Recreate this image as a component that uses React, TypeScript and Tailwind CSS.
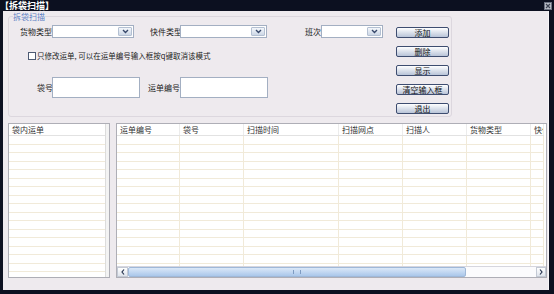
import React from 'react';

const font = "font-['Noto_Sans_CJK_SC','Noto_Sans',sans-serif]";

const Combo: React.FC<{ width: string }> = ({ width }) => (
  <div className={`${width} shrink-0 h-[13px] bg-white border border-[#a3afc2] flex items-center justify-end pr-[1px]`}>
    <div className="w-[14px] h-[9px] rounded-[1px] border border-[#b4c0d2] bg-linear-to-b from-[#f4f7fb] to-[#cdd7e6] flex items-center justify-center">
      <svg width="7" height="5" viewBox="0 0 7 5">
        <path d="M1 1 L3.5 3.5 L6 1" stroke="#37486b" strokeWidth="1.4" fill="none" />
      </svg>
    </div>
  </div>
);

const Btn: React.FC<{ label: string }> = ({ label }) => (
  <div className="w-[53px] h-[11px] rounded-[2px] border border-[#3e4d70] bg-linear-to-b from-[#ffffff] to-[#b9c4d8] flex items-center justify-center text-[8px] leading-none text-[#111] whitespace-nowrap">
    {label}
  </div>
);

const columns = [
  { title: '运单编号', w: 'w-[63px]' },
  { title: '袋号', w: 'w-[64px]' },
  { title: '扫描时间', w: 'w-[95px]' },
  { title: '扫描网点', w: 'w-[64px]' },
  { title: '扫描人', w: 'w-[64px]' },
  { title: '货物类型', w: 'w-[64px]' },
  { title: '快件', w: 'flex-1' },
];

const rows = Array.from({ length: 16 });

export default function App() {
  return (
    <div className={`w-[554px] h-[294px] bg-[#0c1020] flex flex-col ${font}`}>
      <div className="h-[11px] flex items-center justify-between pr-[2px] pt-[1px]">
        <span className="text-white font-bold text-[9px] leading-[10px] whitespace-nowrap">【拆袋扫描】</span>
        <div className="w-[8px] h-[8px] bg-[#b9bdc6] border border-[#6c7282] flex items-center justify-center">
          <svg width="6" height="6" viewBox="0 0 6 6">
            <path d="M1 1 L5 5 M5 1 L1 5" stroke="#3a4050" strokeWidth="1.2" />
          </svg>
        </div>
      </div>

      <div className="flex-1 ml-[3px] mr-[5px] mb-[4px] bg-[#eeeaee] border-r border-[#f8f6f8] flex flex-col text-[8px] text-[#1a1a1a]">
        <fieldset className="ml-[5px] w-[444px] h-[106px] border border-[#dcd7de] rounded-[3px] px-0">
          <legend className="ml-[4px] px-0 text-[8px] leading-[11px] text-[#5b7fc4]">拆袋扫描</legend>
          <div className="flex">
            <div className="w-[378px] flex flex-col whitespace-nowrap">
              <div className="flex items-center mt-[3px] h-[13px]">
                <span className="ml-[11px] w-[32px] shrink-0">货物类型</span>
                <Combo width="w-[82px]" />
                <span className="ml-[16px] w-[30px] shrink-0">快件类型</span>
                <Combo width="w-[87px]" />
                <span className="ml-[38px] w-[16px] shrink-0">班次</span>
                <Combo width="w-[62px]" />
              </div>
              <div className="flex items-center mt-[13px] h-[10px]">
                <div className="ml-[19px] w-[8px] h-[8px] shrink-0 border border-[#4d5a73] bg-white" />
                <span className="ml-[1px] text-[7.5px]">只修改运单, 可以在运单编号输入框按q键取消该模式</span>
              </div>
              <div className="flex items-center mt-[16px] h-[21px]">
                <span className="ml-[28px] w-[15px] shrink-0">袋号</span>
                <div className="w-[88px] h-[21px] shrink-0 bg-white border border-[#a3afc2]" />
                <span className="ml-[8px] w-[32px] shrink-0">运单编号</span>
                <div className="w-[88px] h-[21px] shrink-0 bg-white border border-[#a3afc2]" />
              </div>
            </div>
            <div className="ml-[9px] mt-[5px] flex flex-col gap-[8px]">
              <Btn label="添加" />
              <Btn label="删除" />
              <Btn label="显示" />
              <Btn label="清空输入框" />
              <Btn label="退出" />
            </div>
          </div>
        </fieldset>

        <div className="flex mt-[6px] ml-[5px] h-[155px] gap-[6px]">
          <div className="w-[102px] h-full border border-[#aeaeb6] bg-white flex">
            <div className="w-[96px] flex flex-col overflow-hidden">
              <div className="h-[12px] shrink-0 flex items-center pl-[3px] border-b border-[#e2e2e2] text-[#333]">袋内运单</div>
              {rows.map((_, i) => (
                <div key={i} className="h-[8.5px] shrink-0 border-b border-[#f1ead9]" />
              ))}
            </div>
            <div className="flex-1 bg-[#f3f3f3] border-l border-[#dcdcdc]" />
          </div>

          <div className="w-[431px] h-full border border-[#aeaeb6] bg-white flex flex-col">
            <div className="flex-1 flex flex-col overflow-hidden pr-[2px]">
              <div className="h-[12px] shrink-0 flex border-b border-[#e2e2e2] text-[#333]">
                {columns.map((c) => (
                  <div key={c.title} className={`${c.w} flex items-center pl-[3px] border-r border-[#ececec] overflow-hidden whitespace-nowrap`}>
                    {c.title}
                  </div>
                ))}
              </div>
              {rows.map((_, i) => (
                <div key={i} className="h-[8.5px] shrink-0 flex border-b border-[#f1ead9]">
                  {columns.map((c) => (
                    <div key={c.title} className={`${c.w} border-r border-[#f1ead9]`} />
                  ))}
                </div>
              ))}
            </div>
            <div className="h-[11px] shrink-0 flex border-t border-[#d6d6de] bg-[#fbfbfd]">
              <div className="w-[11px] border border-[#c3c9d4] bg-linear-to-b from-[#ffffff] to-[#dfe4ec] flex items-center justify-center">
                <svg width="4" height="6" viewBox="0 0 4 6">
                  <path d="M3 0.5 L1 3 L3 5.5" stroke="#27344f" strokeWidth="1.2" fill="none" />
                </svg>
              </div>
              <div className="w-[338px] rounded-[2px] border border-[#9fb8d8] bg-linear-to-b from-[#dbe8f8] to-[#aac7ea] flex items-center justify-center">
                <div className="w-[8px] h-[4px] border-x border-[#7f9cc2] border-dashed" />
              </div>
              <div className="flex-1" />
              <div className="w-[10px] border border-[#c3c9d4] bg-linear-to-b from-[#ffffff] to-[#dfe4ec] flex items-center justify-center">
                <svg width="4" height="6" viewBox="0 0 4 6">
                  <path d="M1 0.5 L3 3 L1 5.5" stroke="#27344f" strokeWidth="1.2" fill="none" />
                </svg>
              </div>
            </div>
          </div>
        </div>
      </div>
    </div>
  );
}
